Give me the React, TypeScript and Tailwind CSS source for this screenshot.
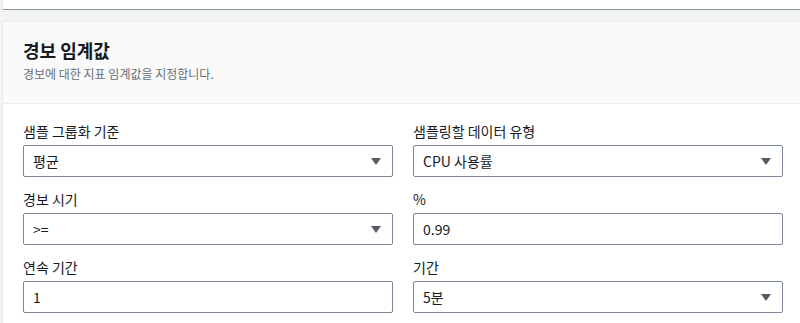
const font = { fontFamily: '"Noto Sans CJK KR", "Noto Sans", sans-serif' };

type Field = { label: string; value: string; select: boolean };

const fields: Field[] = [
  { label: "샘플 그룹화 기준", value: "평균", select: true },
  { label: "샘플링할 데이터 유형", value: "CPU 사용률", select: true },
  { label: "경보 시기", value: ">=", select: true },
  { label: "%", value: "0.99", select: false },
  { label: "연속 기간", value: "1", select: false },
  { label: "기간", value: "5분", select: true },
];

function Caret() {
  return (
    <svg width="10" height="7" viewBox="0 0 10 7" className="shrink-0">
      <path d="M0 0 H10 L5 7 Z" fill="#545b64" />
    </svg>
  );
}

export default function App() {
  return (
    <div
      className="w-full h-[323px] overflow-hidden bg-[#f2f3f3] pl-[2px] text-[#16191f]"
      style={font}
    >
      {/* previous panel, cut off */}
      <div className="w-[801px] h-[10px] bg-white border-l border-l-[#eaeded] border-b border-b-[#8d949c]" />

      {/* alarm threshold panel */}
      <div className="w-[801px] mt-[11px] bg-white border-l border-t border-[#eaeded]">
        <div className="bg-[#fafafa] border-b border-[#eaeded] px-5 pt-[16px] pb-[20px] h-[82px]">
          <h2 className="text-[18px] leading-6 font-bold">경보 임계값</h2>
          <p className="mt-1 text-[12px] leading-4 text-[#687078]">
            경보에 대한 지표 임계값을 지정합니다.
          </p>
        </div>

        <div className="grid grid-cols-[370px_370px] gap-x-5 gap-y-3 px-5 pt-[17px] pb-6">
          {fields.map((f) => (
            <div key={f.label}>
              <label className="block text-[14px] leading-5 mb-1">{f.label}</label>
              <div className="h-8 flex items-center justify-between border border-[#7d8998] rounded-[2px] bg-white pl-[9px] pr-[11px] text-[14px]">
                <span>{f.value}</span>
                {f.select && <Caret />}
              </div>
            </div>
          ))}
        </div>
      </div>
    </div>
  );
}
